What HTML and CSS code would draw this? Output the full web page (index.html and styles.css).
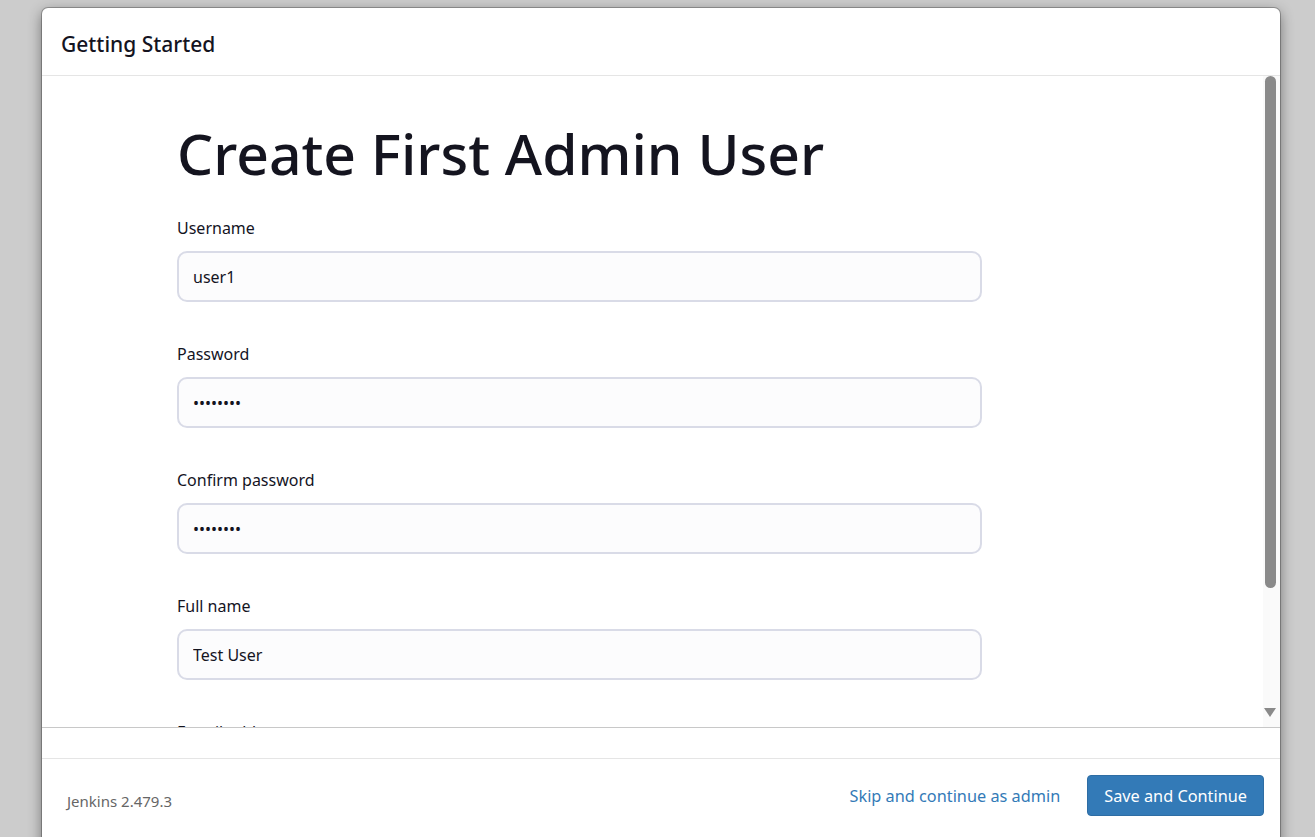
FILE: index.html
```html
<!DOCTYPE html>
<html lang="en">
<head>
  <meta charset="UTF-8" />
  <meta name="viewport" content="width=device-width, initial-scale=1.0" />
  <title>Setup Wizard [Jenkins]</title>
  <link rel="stylesheet" href="styles.css">
</head>
<body>
  <div class="setup-modal">
    <div class="modal-header">
      <h4 class="modal-title">Getting Started</h4>
    </div>
    <div class="modal-body">
      <div class="setup-frame">
        <form class="admin-form">
          <h1>Create First Admin User</h1>
          <div class="form-group">
            <label for="username">Username</label>
            <input id="username" type="text" class="form-control" value="user1">
          </div>
          <div class="form-group">
            <label for="password1">Password</label>
            <input id="password1" type="password" class="form-control" value="password">
          </div>
          <div class="form-group">
            <label for="password2">Confirm password</label>
            <input id="password2" type="password" class="form-control" value="password">
          </div>
          <div class="form-group">
            <label for="fullname">Full name</label>
            <input id="fullname" type="text" class="form-control" value="Test User">
          </div>
          <div class="form-group">
            <label for="email">E-mail address</label>
            <input id="email" type="text" class="form-control" value="">
          </div>
        </form>
        <!-- scrollbar drawn over the frame -->
        <div class="frame-scrollbar" aria-hidden="true">
          <div class="scroll-thumb"></div>
          <div class="scroll-arrow"></div>
        </div>
      </div>
    </div>
    <div class="modal-footer">
      <div class="jenkins-version">Jenkins 2.479.3</div>
      <div class="footer-actions">
        <a href="#" class="skip-link">Skip and continue as admin</a>
        <button type="button" class="btn-primary">Save and Continue</button>
      </div>
    </div>
  </div>
</body>
</html>
```

FILE: styles.css
```css
html, body {
  box-sizing: border-box;
}
body {
  margin: 0;
  height: 837px;
  overflow: hidden;
  background: #cccccc;
  padding: 8px 35px 0 42px;
  font-family: 'Noto Sans', 'Open Sans', Arial, sans-serif;
  color: #14141f;
}
.setup-modal {
  width: 1238px;
  height: 850px;
  background: #fff;
  border-radius: 6px;
  box-shadow: 0 0 0 1px rgba(0,0,0,0.25), 0 4px 14px rgba(0,0,0,0.45);
  display: flex;
  flex-direction: column;
  overflow: hidden;
}
/* Header */
.modal-header {
  height: 68px;
  border-bottom: 1px solid #e5e5e5;
  display: flex;
  align-items: center;
  padding-left: 19px;
  padding-top: 4px;
  box-sizing: border-box;
}
.modal-title {
  margin: 0;
  font-size: 21px;
  font-weight: 500;
  color: #14141f;
}
/* Body with scrolling frame */
.modal-body {
  height: 682px;
  border-bottom: 1px solid #e5e5e5;
}
.setup-frame {
  position: relative;
  height: 651px;
  border-bottom: 1px solid #c8c8c8;
  overflow: hidden;
}
.frame-scrollbar {
  position: absolute;
  top: 0;
  right: 0;
  width: 17px;
  height: 100%;
  background: #fafafa;
}
.scroll-thumb {
  position: absolute;
  top: 0;
  left: 2px;
  width: 11px;
  height: 512px;
  background: #8a8a8a;
  border-radius: 6px;
}
.scroll-arrow {
  position: absolute;
  top: 632px;
  left: 1px;
  width: 0;
  height: 0;
  border-left: 6px solid transparent;
  border-right: 6px solid transparent;
  border-top: 9px solid #8a8a8a;
}
.admin-form {
  padding: 35px 0 74px 135px;
  width: 805px;
}
.admin-form h1 {
  margin: 0 0 22px 0;
  font-size: 57px;
  font-weight: 500;
  line-height: 84px;
  color: #14141f;
}
.form-group {
  margin-bottom: 41px;
}
.form-group label {
  display: block;
  font-size: 16px;
  line-height: 22px;
  margin-bottom: 12px;
  color: #14141f;
}
.form-control {
  display: block;
  box-sizing: border-box;
  width: 805px;
  height: 51px;
  padding: 0 14px;
  border: 2px solid #d9dbe7;
  border-radius: 10px;
  background: #fcfcfd;
  font-family: inherit;
  font-size: 16px;
  color: #14141f;
  outline: none;
}
/* Footer */
.modal-footer {
  flex: 1;
  display: flex;
  align-items: flex-start;
  justify-content: space-between;
  padding: 16px 16px 0 25px;
}
.jenkins-version {
  font-size: 15px;
  color: #666;
  margin-top: 16px;
}
.footer-actions {
  display: flex;
  align-items: center;
  gap: 27px;
}
.skip-link {
  font-size: 16.3px;
  color: #337ab7;
  text-decoration: none;
}
.btn-primary {
  height: 41px;
  padding: 0 16px;
  background: #337ab7;
  color: #fff;
  border: 1px solid #2e6da4;
  border-radius: 4px;
  font-family: inherit;
  font-size: 16.3px;
  cursor: pointer;
}
```
